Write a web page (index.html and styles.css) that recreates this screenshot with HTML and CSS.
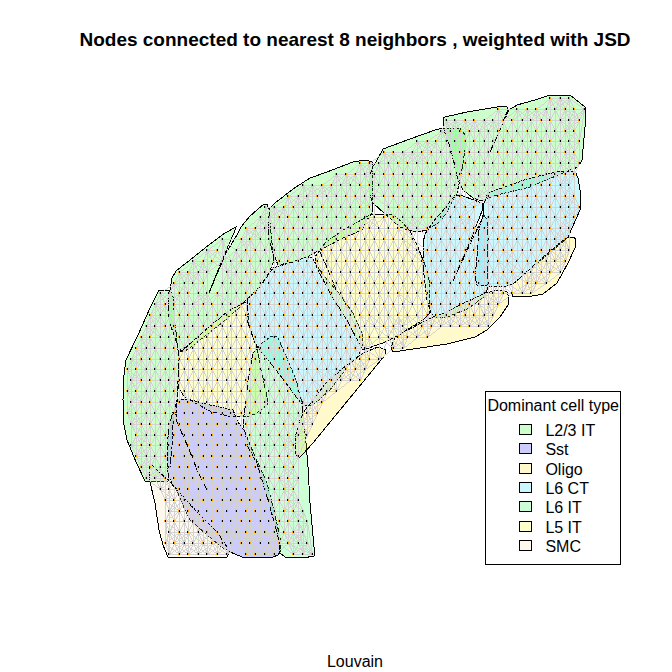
FILE: index.html
```html
<!DOCTYPE html>
<html lang="en">
<head>
<meta charset="utf-8">
<meta name="viewport" content="width=device-width, initial-scale=1">
<title>Louvain</title>
<link rel="stylesheet" href="styles.css">
</head>
<body>
<main class="figure">
  <h1 class="title">Nodes connected to nearest 8 neighbors , weighted with JSD</h1>
  <div class="plot">
    <svg class="graph" viewBox="0 80 672 560" role="img" aria-label="Spatial neighbor graph grouped by Louvain cluster">
      <g id="regions"></g>
      <path id="edges" class="edge"></path>
      <path id="edges-sst" class="edge-sst"></path>
      <path id="nodes-dark" class="node-dark"></path>
      <path id="nodes-orange" class="node-orange"></path>
    </svg>
    <section class="legend">
      <h2 class="legend-title">Dominant cell type</h2>
      <ul class="legend-list">
        <li class="legend-item"><span class="swatch swatch-l23"></span>L2/3 IT</li>
        <li class="legend-item"><span class="swatch swatch-sst"></span>Sst</li>
        <li class="legend-item"><span class="swatch swatch-oligo"></span>Oligo</li>
        <li class="legend-item"><span class="swatch swatch-l6ct"></span>L6 CT</li>
        <li class="legend-item"><span class="swatch swatch-l6it"></span>L6 IT</li>
        <li class="legend-item"><span class="swatch swatch-l5"></span>L5 IT</li>
        <li class="legend-item"><span class="swatch swatch-smc"></span>SMC</li>
      </ul>
    </section>
  </div>
  <p class="caption">Louvain</p>
</main>
<script src="graph.js"></script>
</body>
</html>
```

FILE: styles.css
```css
* {
  box-sizing: border-box;
}

body {
  margin: 0;
  background: #fff;
  color: #000;
  font-family: "Liberation Sans", Arial, sans-serif;
  font-size: 16px;
}

.title {
  height: 80px;
  margin: 0;
  padding: 28px 0 0 38px;
  font-size: 19px;
  line-height: 24px;
  font-weight: bold;
  text-align: center;
  white-space: nowrap;
}

.plot {
  position: relative;
}

.graph {
  display: block;
  width: 100%;
  height: auto;
  shape-rendering: crispEdges;
}

.region {
  stroke: #000;
  stroke-width: 1;
  fill-opacity: 0.2;
}

.crease {
  fill: none;
  stroke: #000;
  stroke-width: 1;
}

.l23 { fill: #00ff00; }
.sst { fill: #0000ff; }
.oligo { fill: #ffe100; }
.l6ct { fill: #00d7ff; }
.l6it { fill: #00ff32; }
.l5 { fill: #ffff00; }
.smc { fill: #ffdca5; }

.edge { fill: #d3d3d3; }
.edge-sst { fill: #d3d0c8; }
.node-dark { fill: #000; }
.node-orange { fill: #ffa500; }

.legend {
  position: absolute;
  top: 311px;
  right: 51px;
  padding: 3px 1px 8px;
  border: 1px solid #000;
  background: #fff;
}

.legend-title {
  margin: 0 0 5px;
  font-size: 16px;
  line-height: 21px;
  font-weight: normal;
}

.legend-list {
  display: flex;
  flex-direction: column;
  justify-content: space-between;
  height: 135px;
  margin: 0;
  padding: 0 0 0 32px;
  list-style: none;
}

.legend-item {
  display: flex;
  align-items: center;
  gap: 13px;
  line-height: 19px;
}

.swatch {
  width: 13px;
  height: 11px;
  margin-bottom: 2px;
  border: 1px solid #000;
}

.swatch-l23 { background: #ccffcc; }
.swatch-sst { background: #ccccff; }
.swatch-oligo { background: #fff9cc; }
.swatch-l6ct { background: #ccf7ff; }
.swatch-l6it { background: #ccffd6; }
.swatch-l5 { background: #ffffcc; }
.swatch-smc { background: #fff8ed; }

.caption {
  margin: 0;
  padding: 12px 0 0 38px;
  line-height: 20px;
  text-align: center;
}
```

FILE: graph.js
```js
// Cluster outlines: cell type and boundary vertices.
const regions = [
  ["l23", "159,290 150,308 138,335 126,360 124,375 123,400 124,425 127,440 136,462 145,481 168,481 170,467 172,447 173,425 176,412 177,400 178,380 178,350 175,323 173,297 170,290"],
  ["l23", "236,227 225,233 205,248 190,260 176,271 172,278 170,290 168,300 168,317 171,327 175,337 178,348 183,352 190,348 200,340 223,322 240,307 247,299 257,290 266,278 271,268 274,260 272,243 270,223 269,210 267,204 264,204 250,216 241,227 237,235 225,255 209,293 225,253 234,233"],
  ["l5", "247,302 248,313 249,327 254,340 257,348 260,363 264,383 267,397 267,405 257,413 247,417 227,416 210,411 195,403 185,397 178,388 178,353 182,351 193,341 210,326 227,312 243,303"],
  ["sst", "178,399 187,399 210,405 233,410 238,422 245,432 253,452 267,483 273,507 280,537 280,552 278,555 273,557 257,558 242,557 230,552 220,546 190,520 185,510 178,493 173,485 168,473 167,447 169,427 172,415"],
  ["smc", "150,482 149,466 152,465 157,470 170,482 197,512 217,532 227,547 229,553 227,557 200,558 168,557 163,545 159,530 155,503"],
  ["l6it", "275,336 278,338 290,365 297,383 302,403 303,417 306,443 308,467 310,503 314,547 314,556 303,558 285,557 280,553 278,537 270,507 257,463 248,447 245,432 243,423 246,400 248,380 253,353 260,345 270,337"],
  ["l6ct", "247,300 260,287 273,268 283,265 307,257 312,258 323,275 338,292 353,313 362,333 363,345 358,356 347,367 330,390 313,405 303,405 300,402 280,375 260,350 255,343 248,323"],
  ["oligo", "386,350 385,355 363,382 340,410 313,443 302,455 298,459 295,453 295,437 300,420 305,410 313,400 326,383 342,369 363,353 378,347"],
  ["l5", "315,257 325,243 343,230 365,218 370,215 380,214 393,215 402,222 410,231 417,245 425,265 429,280 430,313 423,320 395,337 383,343 363,350 360,345 347,320 330,293 317,268"],
  ["l23", "373,162 365,160 353,162 327,172 310,178 293,189 275,203 270,208 268,220 269,237 272,250 278,265 293,262 307,257 322,249 343,238 362,230 367,220 372,213"],
  ["l23", "383,149 410,139 435,130 443,128 460,128 465,135 466,143 463,163 460,180 457,193 453,200 446,214 438,223 427,230 418,232 408,230 400,227 384,213 373,203 369,193 369,178 373,167 377,160"],
  ["l23", "445,117 467,112 503,106 507,107 507,112 499,131 490,152 502,125 509,110 517,105 535,100 550,95 570,95 585,107 585,127 582,160 578,167 563,173 530,187 493,196 482,201 473,198 463,190 458,180 450,147 443,127 443,118"],
  ["l6ct", "482,203 463,196 455,195 446,207 433,222 425,234 423,243 423,257 424,275 427,300 431,313 435,317 447,317 467,309 483,298 487,290 487,220 484,215 471,242 460,266 453,281 468,247 482,211"],
  ["l6ct", "484,203 488,193 527,179 560,171 575,171 578,178 580,190 580,210 568,237 551,252 535,265 513,284 503,287 487,286 477,285 475,277 477,257 479,230 483,215"],
  ["oligo", "576,239 575,248 568,263 557,283 543,294 527,297 512,296 512,285 530,269 548,253 567,237 573,237"],
  ["oligo", "508,295 508,305 500,317 487,330 475,337 447,344 420,348 393,352 391,348 395,337 423,322 433,317 442,314 460,305 483,294 497,290 507,292"]
];

// Folds where an outline doubles back inside its own cluster.
const creases = ["176,407 177,422 188,447 198,472 206,488", "320,252 328,270 337,292"];

// Thinly sampled parts of the outlines.
const sparse = [
  "301,444 320,444 320,518 303,518",
  "376,366 364,378 364,385 339,388 333,400 320,412 310,430 306,450 400,450 400,366",
  "429,331 471,331 471,342 429,342",
  "405,342 480,342 480,358 405,358",
  "140,483 157,483 162,495 164,520 164,540 140,540",
  "580,113 590,113 590,165 580,165"
].map(parse);

// Narrow gaps between clusters; nodes may sit right against them.
const seams = [
  "352,340 392,334 386,350 362,360 345,372",
  "265,255 282,255 282,268 265,280",
  "308,250 320,250 325,275 308,262",
  "296,398 312,398 308,425 298,415",
  "174,310 181,310 184,410 170,410",
  "234,410 246,410 252,445 240,430",
  "366,195 380,205 366,218",
  "452,180 466,180 466,200 450,200",
  "408,225 432,225 424,250 414,240",
  "483,282 516,282 510,298 484,296",
  "476,196 492,192 488,212 478,208",
  "240,298 252,292 250,312 242,308",
  "426,305 440,310 430,325 420,322"
].map(parse);

function parse(text) {
  return text.split(" ").map(pair => pair.split(",").map(Number));
}

function inside(x, y, polygon) {
  let hit = false;
  for (let i = 0, j = polygon.length - 1; i < polygon.length; j = i++) {
    const [ax, ay] = polygon[i];
    const [bx, by] = polygon[j];
    if ((ay > y) !== (by > y) && x < (bx - ax) * (y - ay) / (by - ay) + ax) hit = !hit;
  }
  return hit;
}

const outlines = regions.map(([, points]) => parse(points));
const covered = (x, y) => outlines.some(o => inside(x, y, o));
const bounded = (x, y) => covered(x, y) || seams.some(s => inside(x, y, s));

const nodes = [];
for (let row = 0; row <= 42; row++) {
  for (let col = -2; col < 50; col++) {
    const x = 131.3 + 9.523 * (col + (row % 2) / 2);
    const y = 98 + 10.857 * row;
    const sampled = covered(x, y) && bounded(x - 1, y) && bounded(x + 1, y) && bounded(x, y + 2) && bounded(x, y - 2);
    if (sampled && !sparse.some(s => inside(x, y, s))) {
      nodes.push({ x: Math.round(x), y: Math.round(y), u: col + (row % 2) / 2, v: row * 0.865, flip: col % 2 !== 0 });
    }
  }
}

const edges = new Set();
nodes.forEach((a, i) => {
  nodes
    .map((b, j) => [Math.hypot(a.u - b.u, a.v - b.v), j])
    .filter(([, j]) => j !== i)
    .sort((p, q) => p[0] - q[0])
    .slice(0, 8)
    .forEach(([, j]) => edges.add(Math.min(i, j) + "-" + Math.max(i, j)));
});

// Aliased one-pixel lines, each pixel drawn once.
const plain = new Set();
const sst = new Set();
edges.forEach(key => {
  const [a, b] = key.split("-").map(i => nodes[i]);
  const target = inside((a.x + b.x) / 2, (a.y + b.y) / 2, outlines[3]) ? sst : plain;
  const steps = Math.max(Math.abs(b.x - a.x), Math.abs(b.y - a.y));
  for (let s = 0; s <= steps; s++) {
    target.add(Math.round(a.x + (b.x - a.x) * s / steps) + " " + Math.round(a.y + (b.y - a.y) * s / steps));
  }
});
const pixels = set => [...set].map(p => `M${p}h1v1h-1z`).join("");

let dark = "";
let orange = "";
nodes.forEach(n => {
  const left = `M${n.x - 1} ${n.y - 1}h1v2h-1z`;
  const right = `M${n.x} ${n.y - 1}h1v2h-1z`;
  dark += n.flip ? right : left;
  orange += n.flip ? left : right;
});

document.getElementById("regions").innerHTML =
  regions.map(([type, points]) => `<polygon class="region ${type}" points="${points}"/>`).join("") +
  creases.map(points => `<polyline class="crease" points="${points}"/>`).join("");
document.getElementById("edges").setAttribute("d", pixels(plain));
document.getElementById("edges-sst").setAttribute("d", pixels(sst));
document.getElementById("nodes-dark").setAttribute("d", dark);
document.getElementById("nodes-orange").setAttribute("d", orange);
```
